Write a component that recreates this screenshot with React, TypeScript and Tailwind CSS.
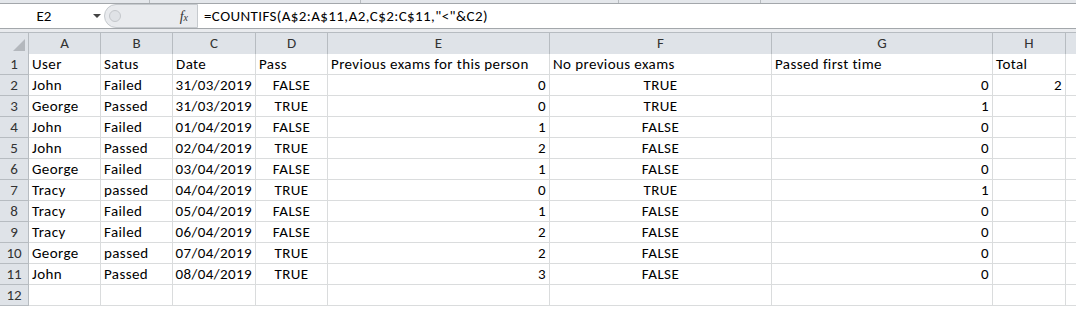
const font = "font-['Calibri','Carlito','Lato','Liberation_Sans',sans-serif]"

type Align = 'l' | 'c' | 'r'
type Cell = [string, Align]

const widths = [72, 72, 83, 72, 222, 222, 221, 73]
const letters = ['A', 'B', 'C', 'D', 'E', 'F', 'G', 'H']

const raw: [string, string, string, string, string, string, string, string][] = [
  ['John', 'Failed', '31/03/2019', 'FALSE', '0', 'TRUE', '0', '2'],
  ['George', 'Passed', '31/03/2019', 'TRUE', '0', 'TRUE', '1', ''],
  ['John', 'Failed', '01/04/2019', 'FALSE', '1', 'FALSE', '0', ''],
  ['John', 'Passed', '02/04/2019', 'TRUE', '2', 'FALSE', '0', ''],
  ['George', 'Failed', '03/04/2019', 'FALSE', '1', 'FALSE', '0', ''],
  ['Tracy', 'passed', '04/04/2019', 'TRUE', '0', 'TRUE', '1', ''],
  ['Tracy', 'Failed', '05/04/2019', 'FALSE', '1', 'FALSE', '0', ''],
  ['Tracy', 'Failed', '06/04/2019', 'FALSE', '2', 'FALSE', '0', ''],
  ['George', 'passed', '07/04/2019', 'TRUE', '2', 'FALSE', '0', ''],
  ['John', 'Passed', '08/04/2019', 'TRUE', '3', 'FALSE', '0', ''],
]

const header: Cell[] = [
  ['User', 'l'], ['Satus', 'l'], ['Date', 'l'], ['Pass', 'l'],
  ['Previous exams for this person', 'l'], ['No previous exams', 'l'], ['Passed first time', 'l'], ['Total', 'l'],
]

// numbers/dates right, booleans centred, text left (Excel defaults)
const rows: Cell[][] = [
  header,
  ...raw.map((r) => r.map((v, i): Cell => [v, i < 2 ? 'l' : i === 3 || i === 5 ? 'c' : 'r'])),
  widths.map((): Cell => ['', 'l']),
]

const alignClass: Record<Align, string> = {
  l: 'justify-start pl-[3px]',
  c: 'justify-center',
  r: 'justify-end pr-[3px]',
}

function FormulaBar() {
  return (
    <div className="flex h-[24px] bg-white">
      <div className="relative flex w-[104px] items-center">
        <span className="w-full pl-[8px] pr-[24px] text-center text-[15px]">E2</span>
        <span className="absolute left-[93px] top-[10px] h-0 w-0 border-x-[4px] border-t-[4px] border-x-transparent border-t-[#444]" />
      </div>
      <div className="flex w-[94px] items-center rounded-l-[12px] border border-[#c6cace] bg-[#e9ebee]">
        <span className="ml-[4px] h-[12px] w-[12px] rounded-full border border-[#c4c7cb] bg-[#dfe2e6]" />
        <span className="ml-auto mr-[9px] font-['Liberation_Serif',serif] text-[14px] italic text-[#333]">
          f<span className="text-[10px]">x</span>
        </span>
      </div>
      <div className="flex items-center pl-[6px] text-[15px] tracking-[0.4px]">=COUNTIFS(A$2:A$11,A2,C$2:C$11,"&lt;"&amp;C2)</div>
    </div>
  )
}

export default function App() {
  return (
    <div className={`h-[311px] w-[1076px] overflow-hidden bg-white text-black ${font}`}>
      <div className="relative box-content h-[3px] border-b border-[#a3a7ab] bg-[#e4e7eb]">
        <span className="absolute left-[149px] top-0 h-[3px] w-px bg-[#b8bcc0]" />
        <span className="absolute left-[360px] top-0 h-[3px] w-px bg-[#b8bcc0]" />
        <span className="absolute left-[618px] top-0 h-[3px] w-px bg-[#b8bcc0]" />
        <span className="absolute left-[760px] top-0 h-[3px] w-px bg-[#b8bcc0]" />
      </div>
      <FormulaBar />
      <div className="h-[1px] bg-[#a3a7ab]" />
      <div className="h-[3px] bg-[#e9ebee]" />

      {/* column headers */}
      <div className="flex h-[22px] border-t border-[#b7bcc1] bg-[#dfe3e8] text-[15px] text-[#333]">
        <div className="relative w-[29px] shrink-0 border-r border-[#b7bcc1]">
          <span className="absolute bottom-[3px] right-[3px] h-0 w-0 border-b-[12px] border-l-[12px] border-b-[#b4b8bd] border-l-transparent" />
        </div>
        {letters.map((l, i) => (
          <div
            key={l}
            style={{ width: widths[i] }}
            className="flex shrink-0 items-center justify-center border-r border-[#b7bcc1]"
          >
            {l}
          </div>
        ))}
        <div className="flex-1" />
      </div>

      {rows.map((row, ri) => (
        <div key={ri} className="flex h-[21px] text-[15px] tracking-[0.4px]">
          <div className="flex w-[29px] shrink-0 items-center justify-center border-r border-b border-[#b7bcc1] bg-[#dfe3e8] tracking-normal text-[#333]">
            {ri + 1}
          </div>
          {row.map(([v, a], ci) => (
            <div
              key={ci}
              style={{ width: widths[ci] }}
              className={`flex shrink-0 items-center overflow-hidden whitespace-nowrap border-r border-b border-[#dadcdd] ${alignClass[a]}`}
            >
              {v}
            </div>
          ))}
          <div className="flex-1 border-b border-[#dadcdd]" />
        </div>
      ))}
    </div>
  )
}
